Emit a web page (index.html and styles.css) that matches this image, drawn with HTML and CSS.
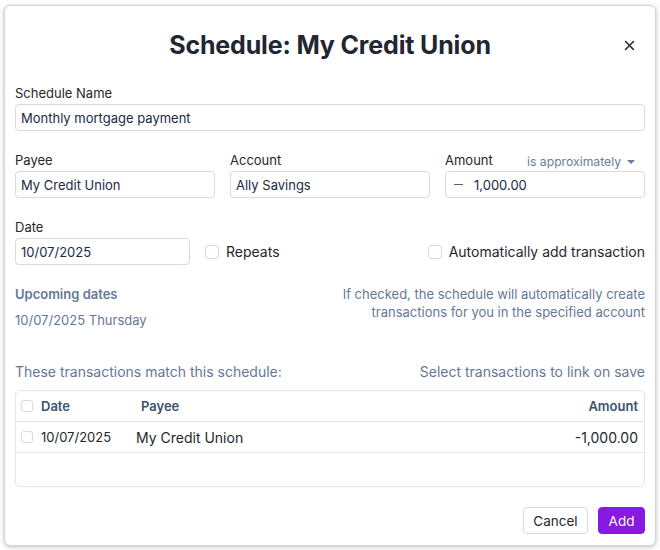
FILE: index.html
```html
<!DOCTYPE html>
<html>
<head>
<meta charset="utf-8">
<link rel="stylesheet" href="styles.css">
</head>
<body>
<div class="modal">
  <div class="header">
    <h1 class="title">Schedule: My Credit Union</h1>
    <button class="close" aria-label="Close">
      <svg width="11" height="11" viewBox="0 0 11 11"><path d="M1.5 1.5L9.5 9.5M9.5 1.5L1.5 9.5" stroke="#1f2b3d" stroke-width="1.6" stroke-linecap="round"/></svg>
    </button>
  </div>

  <div class="field">
    <label class="label">Schedule Name</label>
    <div class="input">Monthly mortgage payment</div>
  </div>

  <div class="row3">
    <div class="field">
      <label class="label">Payee</label>
      <div class="input">My Credit Union</div>
    </div>
    <div class="field">
      <label class="label">Account</label>
      <div class="input">Ally Savings</div>
    </div>
    <div class="field">
      <div class="label-row">
        <label class="label">Amount</label>
        <span class="op">is approximately <span class="caret"></span></span>
      </div>
      <div class="input amount"><span class="minus"></span><span>1,000.00</span></div>
    </div>
  </div>

  <div class="date-row">
    <div class="field date-field">
      <label class="label">Date</label>
      <div class="input">10/07/2025</div>
    </div>
    <label class="check repeats"><span class="box"></span>Repeats</label>
    <label class="check auto"><span class="box"></span>Automatically add transaction</label>
  </div>

  <div class="info-row">
    <div class="upcoming">
      <div class="up-title">Upcoming dates</div>
      <div class="up-date">10/07/2025 Thursday</div>
    </div>
    <div class="hint">If checked, the schedule will automatically create<br>transactions for you in the specified account</div>
  </div>

  <div class="match-row">
    <span>These transactions match this schedule:</span>
    <span>Select transactions to link on save</span>
  </div>

  <div class="table">
    <div class="tr th">
      <span class="cb"></span>
      <span class="c-date">Date</span>
      <span class="c-payee">Payee</span>
      <span class="c-amt">Amount</span>
    </div>
    <div class="tr td">
      <span class="cb"></span>
      <span class="c-date">10/07/2025</span>
      <span class="c-payee body-payee">My Credit Union</span>
      <span class="c-amt">-1,000.00</span>
    </div>
    <div class="empty"></div>
  </div>

  <div class="footer">
    <button class="btn cancel">Cancel</button>
    <button class="btn add">Add</button>
  </div>
</div>
</body>
</html>
```

FILE: styles.css
```css
* { box-sizing: border-box; }
html, body { margin: 0; padding: 0; background: #ffffff; }
body {
  font-family: Inter, "Noto Sans", sans-serif;
  font-size: 13px;
  color: #1f2937;
  padding: 5px 4px 4px 4px;
}
.modal {
  width: 652px;
  height: 541px;
  border: 1px solid #d4d4d8;
  border-radius: 6px;
  box-shadow: 0 1px 4px rgba(0,0,0,0.25);
  padding: 10px;
  background: #fff;
}
.header {
  position: relative;
  height: 59px;
  display: flex;
  align-items: center;
  justify-content: center;
}
.title {
  margin: 0;
  font-size: 25px;
  font-weight: 700;
  color: #222630;
  letter-spacing: -0.15px;
  margin-top: -1px;
}
.close {
  position: absolute;
  right: 10px;
  top: 24px;
  background: none;
  border: 0;
  padding: 0;
  width: 11px;
  height: 11px;
  display: flex;
}
.field { display: flex; flex-direction: column; }
.label {
  line-height: 16px;
  color: #24272c;
  margin-bottom: 3px;
}
.header + .field { margin-top: 10px; }
.input {
  height: 27px;
  border: 1px solid #d6dbe2;
  border-radius: 4px;
  padding: 0 5px;
  display: flex;
  align-items: center;
  color: #1b2a44;
  background: #fff;
}
.row3 {
  display: grid;
  grid-template-columns: 200px 200px 200px;
  gap: 15px;
  margin-top: 21px;
}
.label-row { display: flex; justify-content: space-between; }
.op { color: #6b7c96; line-height: 16px; font-size: 12.2px; display: flex; align-items: center; padding-right: 10px; }
.caret {
  display: inline-block;
  width: 0; height: 0;
  border-left: 4px solid transparent;
  border-right: 4px solid transparent;
  border-top: 4px solid #6b7c96;
  margin-left: 6px;
}
.amount { padding-left: 8px; }
.minus {
  width: 9px;
  height: 1.5px;
  background: #5a6475;
  margin-right: 11px;
}
.date-row {
  display: flex;
  align-items: flex-end;
  margin-top: 21px;
}
.date-field { width: 175px; }
.check {
  display: flex;
  align-items: center;
  height: 27px;
  font-size: 14px;
  color: #24272c;
}
.box {
  width: 14px;
  height: 14px;
  border: 1px solid #d6dbe2;
  border-radius: 3px;
  margin-right: 7px;
  background: #fff;
}
.repeats { margin-left: 15px; }
.auto { margin-left: auto; }
.info-row {
  display: flex;
  justify-content: space-between;
  margin-top: 20px;
}
.up-title { font-weight: 600; color: #667896; line-height: 16px; margin-top: 1px; }
.up-date { color: #667896; line-height: 16px; margin-top: 10px; }
.hint { text-align: right; color: #667896; line-height: 18px; font-size: 13px; }
.match-row {
  display: flex;
  justify-content: space-between;
  color: #667896;
  font-size: 14px;
  line-height: 16px;
  margin-top: 36px;
}
.table {
  margin-top: 10px;
  border: 1px solid #e2e6ec;
  border-radius: 5px;
  height: 97px;
  display: flex;
  flex-direction: column;
}
.tr {
  display: flex;
  align-items: center;
  height: 31px;
  border-bottom: 1px solid #e2e6ec;
  padding: 0 6px 0 5px;
}
.cb {
  width: 12px;
  height: 12px;
  border: 1px solid #d6dbe2;
  border-radius: 3px;
  margin-right: 8px;
}
.th { font-weight: 600; color: #3e5270; }
.td { color: #24272c; font-size: 13px; }
.c-date { width: 100px; }
.c-payee { flex: 1; }
.body-payee { margin-left: -5px; font-size: 14px; }
.td .c-amt { font-size: 14px; }
.c-amt { text-align: right; }
.footer {
  display: flex;
  justify-content: flex-end;
  gap: 10px;
  margin-top: 20px;
}
.btn {
  font-family: inherit;
  font-size: 13.5px;
  height: 27px;
  border-radius: 4px;
  padding: 0 12px;
  cursor: pointer;
}
.cancel { background: #fff; border: 1px solid #d6dbe2; color: #24272c; width: 65px; padding: 0; }
.add { background: #8719e0; border: 1px solid #8719e0; color: #fff; width: 47px; padding: 0; }
```
